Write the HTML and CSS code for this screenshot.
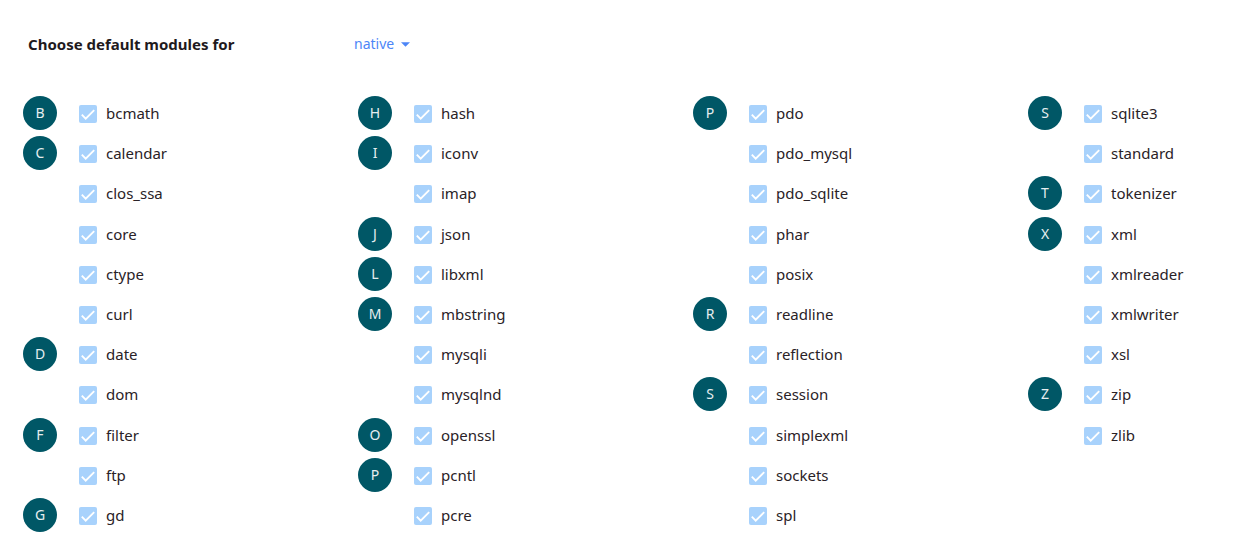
FILE: index.html
```html
<!DOCTYPE html>
<html lang="en">
<head>
<meta charset="utf-8">
<title>Default modules</title>
<link rel="stylesheet" href="styles.css">
</head>
<body>
<header class="heading">
<h1 class="title"><label for="version">Choose default modules for</label></h1>
<div class="picker">
<select id="version" class="version"><option>native</option></select>
<svg class="caret" viewBox="0 0 8 4" aria-hidden="true"><path d="M0 0h8L4 4z"/></svg>
</div>
</header>
<main class="modules">
<ul class="column">
<li class="row"><span class="badge">B</span><label class="module"><input class="tick" type="checkbox" checked>bcmath</label></li>
<li class="row"><span class="badge">C</span><label class="module"><input class="tick" type="checkbox" checked>calendar</label></li>
<li class="row"><label class="module"><input class="tick" type="checkbox" checked>clos_ssa</label></li>
<li class="row"><label class="module"><input class="tick" type="checkbox" checked>core</label></li>
<li class="row"><label class="module"><input class="tick" type="checkbox" checked>ctype</label></li>
<li class="row"><label class="module"><input class="tick" type="checkbox" checked>curl</label></li>
<li class="row"><span class="badge">D</span><label class="module"><input class="tick" type="checkbox" checked>date</label></li>
<li class="row"><label class="module"><input class="tick" type="checkbox" checked>dom</label></li>
<li class="row"><span class="badge">F</span><label class="module"><input class="tick" type="checkbox" checked>filter</label></li>
<li class="row"><label class="module"><input class="tick" type="checkbox" checked>ftp</label></li>
<li class="row"><span class="badge">G</span><label class="module"><input class="tick" type="checkbox" checked>gd</label></li>
</ul>
<ul class="column">
<li class="row"><span class="badge">H</span><label class="module"><input class="tick" type="checkbox" checked>hash</label></li>
<li class="row"><span class="badge">I</span><label class="module"><input class="tick" type="checkbox" checked>iconv</label></li>
<li class="row"><label class="module"><input class="tick" type="checkbox" checked>imap</label></li>
<li class="row"><span class="badge">J</span><label class="module"><input class="tick" type="checkbox" checked>json</label></li>
<li class="row"><span class="badge">L</span><label class="module"><input class="tick" type="checkbox" checked>libxml</label></li>
<li class="row"><span class="badge">M</span><label class="module"><input class="tick" type="checkbox" checked>mbstring</label></li>
<li class="row"><label class="module"><input class="tick" type="checkbox" checked>mysqli</label></li>
<li class="row"><label class="module"><input class="tick" type="checkbox" checked>mysqlnd</label></li>
<li class="row"><span class="badge">O</span><label class="module"><input class="tick" type="checkbox" checked>openssl</label></li>
<li class="row"><span class="badge">P</span><label class="module"><input class="tick" type="checkbox" checked>pcntl</label></li>
<li class="row"><label class="module"><input class="tick" type="checkbox" checked>pcre</label></li>
</ul>
<ul class="column">
<li class="row"><span class="badge">P</span><label class="module"><input class="tick" type="checkbox" checked>pdo</label></li>
<li class="row"><label class="module"><input class="tick" type="checkbox" checked>pdo_mysql</label></li>
<li class="row"><label class="module"><input class="tick" type="checkbox" checked>pdo_sqlite</label></li>
<li class="row"><label class="module"><input class="tick" type="checkbox" checked>phar</label></li>
<li class="row"><label class="module"><input class="tick" type="checkbox" checked>posix</label></li>
<li class="row"><span class="badge">R</span><label class="module"><input class="tick" type="checkbox" checked>readline</label></li>
<li class="row"><label class="module"><input class="tick" type="checkbox" checked>reflection</label></li>
<li class="row"><span class="badge">S</span><label class="module"><input class="tick" type="checkbox" checked>session</label></li>
<li class="row"><label class="module"><input class="tick" type="checkbox" checked>simplexml</label></li>
<li class="row"><label class="module"><input class="tick" type="checkbox" checked>sockets</label></li>
<li class="row"><label class="module"><input class="tick" type="checkbox" checked>spl</label></li>
</ul>
<ul class="column">
<li class="row"><span class="badge">S</span><label class="module"><input class="tick" type="checkbox" checked>sqlite3</label></li>
<li class="row"><label class="module"><input class="tick" type="checkbox" checked>standard</label></li>
<li class="row"><span class="badge">T</span><label class="module"><input class="tick" type="checkbox" checked>tokenizer</label></li>
<li class="row"><span class="badge">X</span><label class="module"><input class="tick" type="checkbox" checked>xml</label></li>
<li class="row"><label class="module"><input class="tick" type="checkbox" checked>xmlreader</label></li>
<li class="row"><label class="module"><input class="tick" type="checkbox" checked>xmlwriter</label></li>
<li class="row"><label class="module"><input class="tick" type="checkbox" checked>xsl</label></li>
<li class="row"><span class="badge">Z</span><label class="module"><input class="tick" type="checkbox" checked>zip</label></li>
<li class="row"><label class="module"><input class="tick" type="checkbox" checked>zlib</label></li>
</ul>
</main>
</body>
</html>
```
FILE: styles.css
```css
* { box-sizing: border-box; }

body {
  display: flex;
  flex-direction: column;
  min-height: 100vh;
  margin: 0;
  padding: 32px 24px 27px 23px;
  background: #fff;
  color: #2a2227;
  font: 15px/24px "Noto Sans", sans-serif;
}

/* The heading and the module lists share the same column tracks. */
.heading,
.modules {
  display: grid;
  grid-template-columns: repeat(3, minmax(0, 1fr)) 186px;
}

.heading { margin-bottom: 40px; }

.title {
  margin: 0;
  padding-left: 5px;
  color: #1f1a1d;
  font-size: 15px;
  line-height: 24px;
  font-weight: 700;
}

.picker {
  display: flex;
  align-items: center;
  margin-left: -4px;
}

.version {
  appearance: none;
  margin: 0 -16px 0 0;
  padding: 0 22px 0 0;
  border: 0;
  background: transparent;
  color: #4d86f7;
  font: 14px/24px "Noto Sans", sans-serif;
}

.caret {
  width: 9px;
  height: 5px;
  margin-top: 1px;
  fill: #4d86f7;
  pointer-events: none;
}

.modules {
  flex: 1;
}

.column {
  display: grid;
  grid-template-rows: repeat(11, 34px);
  align-content: space-between;
  row-gap: 6px;
  margin: 0;
  padding: 0;
  list-style: none;
}

.row {
  display: grid;
  grid-template-columns: 34px 1fr;
  column-gap: 22px;
  align-items: center;
}

.badge {
  width: 34px;
  height: 34px;
  border-radius: 50%;
  background: #005766;
  color: #e6eef0;
  font-size: 14px;
  line-height: 34px;
  text-align: center;
}

.module {
  display: flex;
  grid-column: 2;
  align-items: center;
  gap: 9px;
}

.tick {
  appearance: none;
  width: 18px;
  height: 18px;
  margin: 2px 0 0;
  border-radius: 2px;
  background: #a8d2fc url("data:image/svg+xml,%3Csvg xmlns='http://www.w3.org/2000/svg' viewBox='0 0 18 18'%3E%3Cpath d='M2.8 9.7L6.7 13.7L15.2 5.2' fill='none' stroke='white' stroke-width='1.9'/%3E%3C/svg%3E") center / 18px 18px;
}
```
